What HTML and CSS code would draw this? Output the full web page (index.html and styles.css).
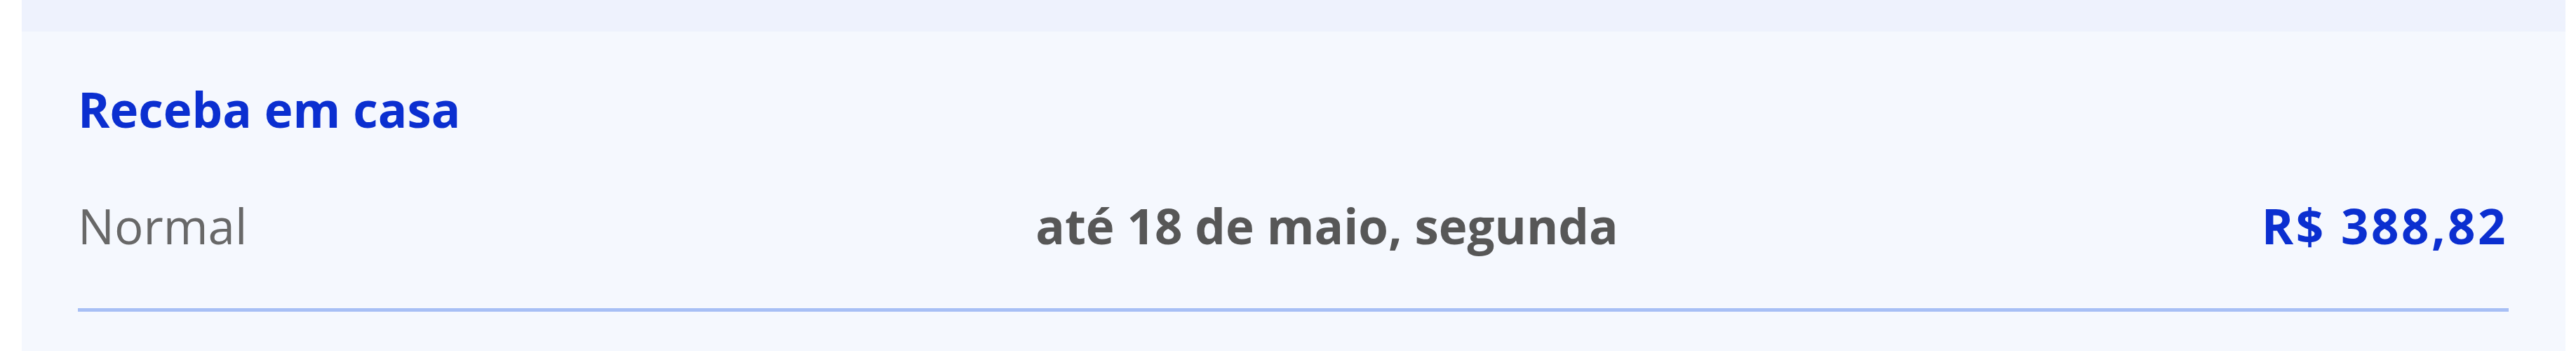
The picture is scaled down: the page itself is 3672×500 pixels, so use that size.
FILE: index.html
```html
<!DOCTYPE html>
<html lang="pt-BR">
<head>
    <meta charset="UTF-8">
    <meta name="viewport" content="width=device-width, initial-scale=1.0">
    <title>Receba em casa</title>
    <link rel="stylesheet" href="styles.css">
</head>
<body>
    <div class="card">
        <div class="card-top"></div>
        <div class="card-body">
            <div class="delivery-title">Receba em casa</div>
            <div class="delivery-row">
                <span class="delivery-type">Normal</span>
                <span class="delivery-date">até 18 de maio, segunda</span>
                <span class="delivery-price">R$ 388,82</span>
            </div>
            <div class="divider"></div>
        </div>
    </div>
</body>
</html>
```

FILE: styles.css
```css
body, html {
    margin: 0;
    padding: 0;
    background-color: #ffffff;
    overflow: hidden;
}

body {
    font-family: "Open Sans", "Noto Sans", sans-serif;
}

.card {
    margin: 0 15px 0 31px;
    height: 500px;
    background-color: #f5f8fe;
}

.card-top {
    height: 45px;
    background-color: #eef2fd;
}

.card-body {
    padding: 76px 81px 0 80px;
}

.delivery-title {
    font-size: 69px;
    line-height: 1;
    font-weight: 700;
    color: #0b2fd0;
}

.delivery-row {
    display: grid;
    grid-template-columns: 39.4% auto 1fr;
    align-items: baseline;
    margin-top: 97px;
    font-size: 69px;
    line-height: 1;
}

.delivery-type {
    color: #686868;
}

.delivery-date {
    font-weight: 700;
    color: #575757;
}

.delivery-price {
    font-weight: 700;
    color: #0b2fd0;
    text-align: right;
    letter-spacing: 3.5px;
    margin-right: 1px;
}

.divider {
    margin-top: 83px;
    height: 5px;
    background-color: #a7bff5;
}
```
